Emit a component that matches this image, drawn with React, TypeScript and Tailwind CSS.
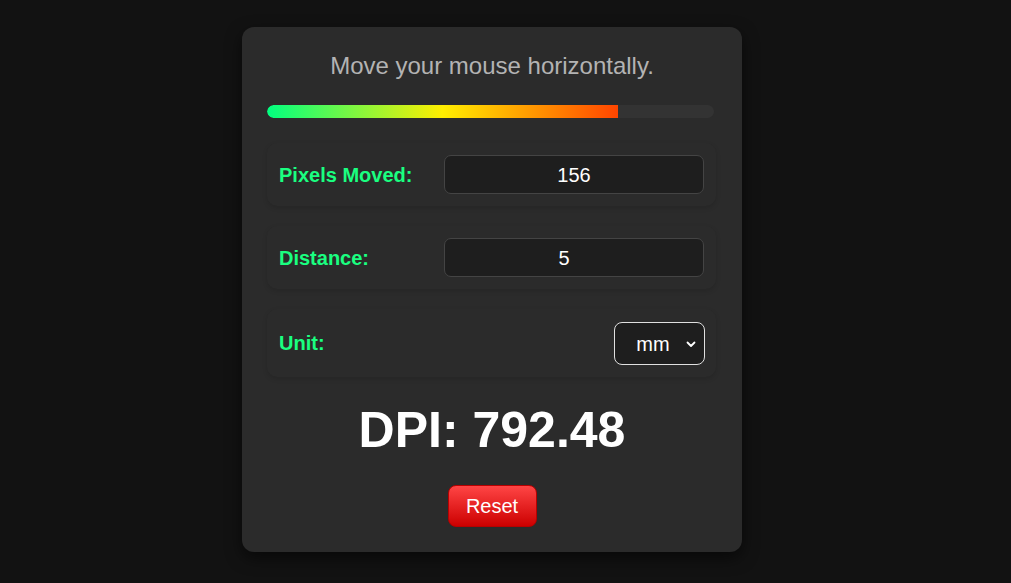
import React from "react";

export default function App() {
  const progress = 78.5;
  return (
    <div
      className="min-h-[583px] w-full bg-[#121212] pt-[27px]"
      style={{ fontFamily: '"Liberation Sans", Arial, sans-serif' }}
    >
      <div className="ml-[242px] w-[500px] rounded-[12px] bg-[#2b2b2b] p-[25px] shadow-[0_6px_16px_rgba(0,0,0,0.55)] text-center">
        <div className="text-[24px] leading-[28px] text-[#b3b3b3]">
          Move your mouse horizontally.
        </div>

        <div className="mt-[25px] h-[13px] w-[447px] overflow-hidden rounded-full bg-[#333333]">
          <div
            className="h-full rounded-l-full bg-[linear-gradient(90deg,#00ff80,#ffee00,#ff4500)]"
            style={{ width: `${progress}%` }}
          />
        </div>

        <div className="mt-[25px] flex w-[449px] flex-col gap-[20px]">
          <div className="flex items-center rounded-[10px] bg-[#2b2b2b] p-[12px] shadow-[0_2px_5px_rgba(0,0,0,0.13)]">
            <div className="flex-1 text-left text-[20px] font-bold text-[#1aff80]">Pixels Moved:</div>
            <div className="flex h-[39px] w-[260px] items-center justify-center rounded-[7px] border border-[#444444] bg-[#1e1e1e] text-[20px] text-white">
              156
            </div>
          </div>
          <div className="flex items-center rounded-[10px] bg-[#2b2b2b] p-[12px] shadow-[0_2px_5px_rgba(0,0,0,0.13)]">
            <div className="flex-1 text-left text-[20px] font-bold text-[#1aff80]">Distance:</div>
            <div className="flex h-[39px] w-[260px] items-center justify-center rounded-[7px] border border-[#444444] bg-[#1e1e1e] pr-[20px] text-[20px] text-white">
              5
            </div>
          </div>
          <div className="flex items-center rounded-[10px] bg-[#2b2b2b] p-[12px] pr-[11px] shadow-[0_2px_5px_rgba(0,0,0,0.13)]">
            <div className="flex-1 text-left text-[20px] font-bold text-[#1aff80]">Unit:</div>
            <div className="mt-[1px] flex h-[43px] w-[91px] items-center rounded-[8px] border border-[#e0e0e0] bg-[#1e1e1e] pl-[14px] pr-[7px] text-[20px] text-white">
              <span className="flex-1 text-center">mm</span>
              <svg width="12" height="12" viewBox="0 0 12 12" className="ml-[8px]">
                <path d="M2.5 4.5 L6 8 L9.5 4.5" fill="none" stroke="#ffffff" strokeWidth="1.8" strokeLinecap="round" strokeLinejoin="round" />
              </svg>
            </div>
          </div>
        </div>

        <div className="mt-[25px] text-[50px] font-bold leading-[57px] text-white">DPI: 792.48</div>

        <div className="mt-[26px] flex justify-center">
          <button className="h-[42px] w-[89px] rounded-[8px] border border-[#b80000] bg-[linear-gradient(180deg,#ff4545,#cc0000)] text-[20px] text-white">
            Reset
          </button>
        </div>
      </div>
    </div>
  );
}
